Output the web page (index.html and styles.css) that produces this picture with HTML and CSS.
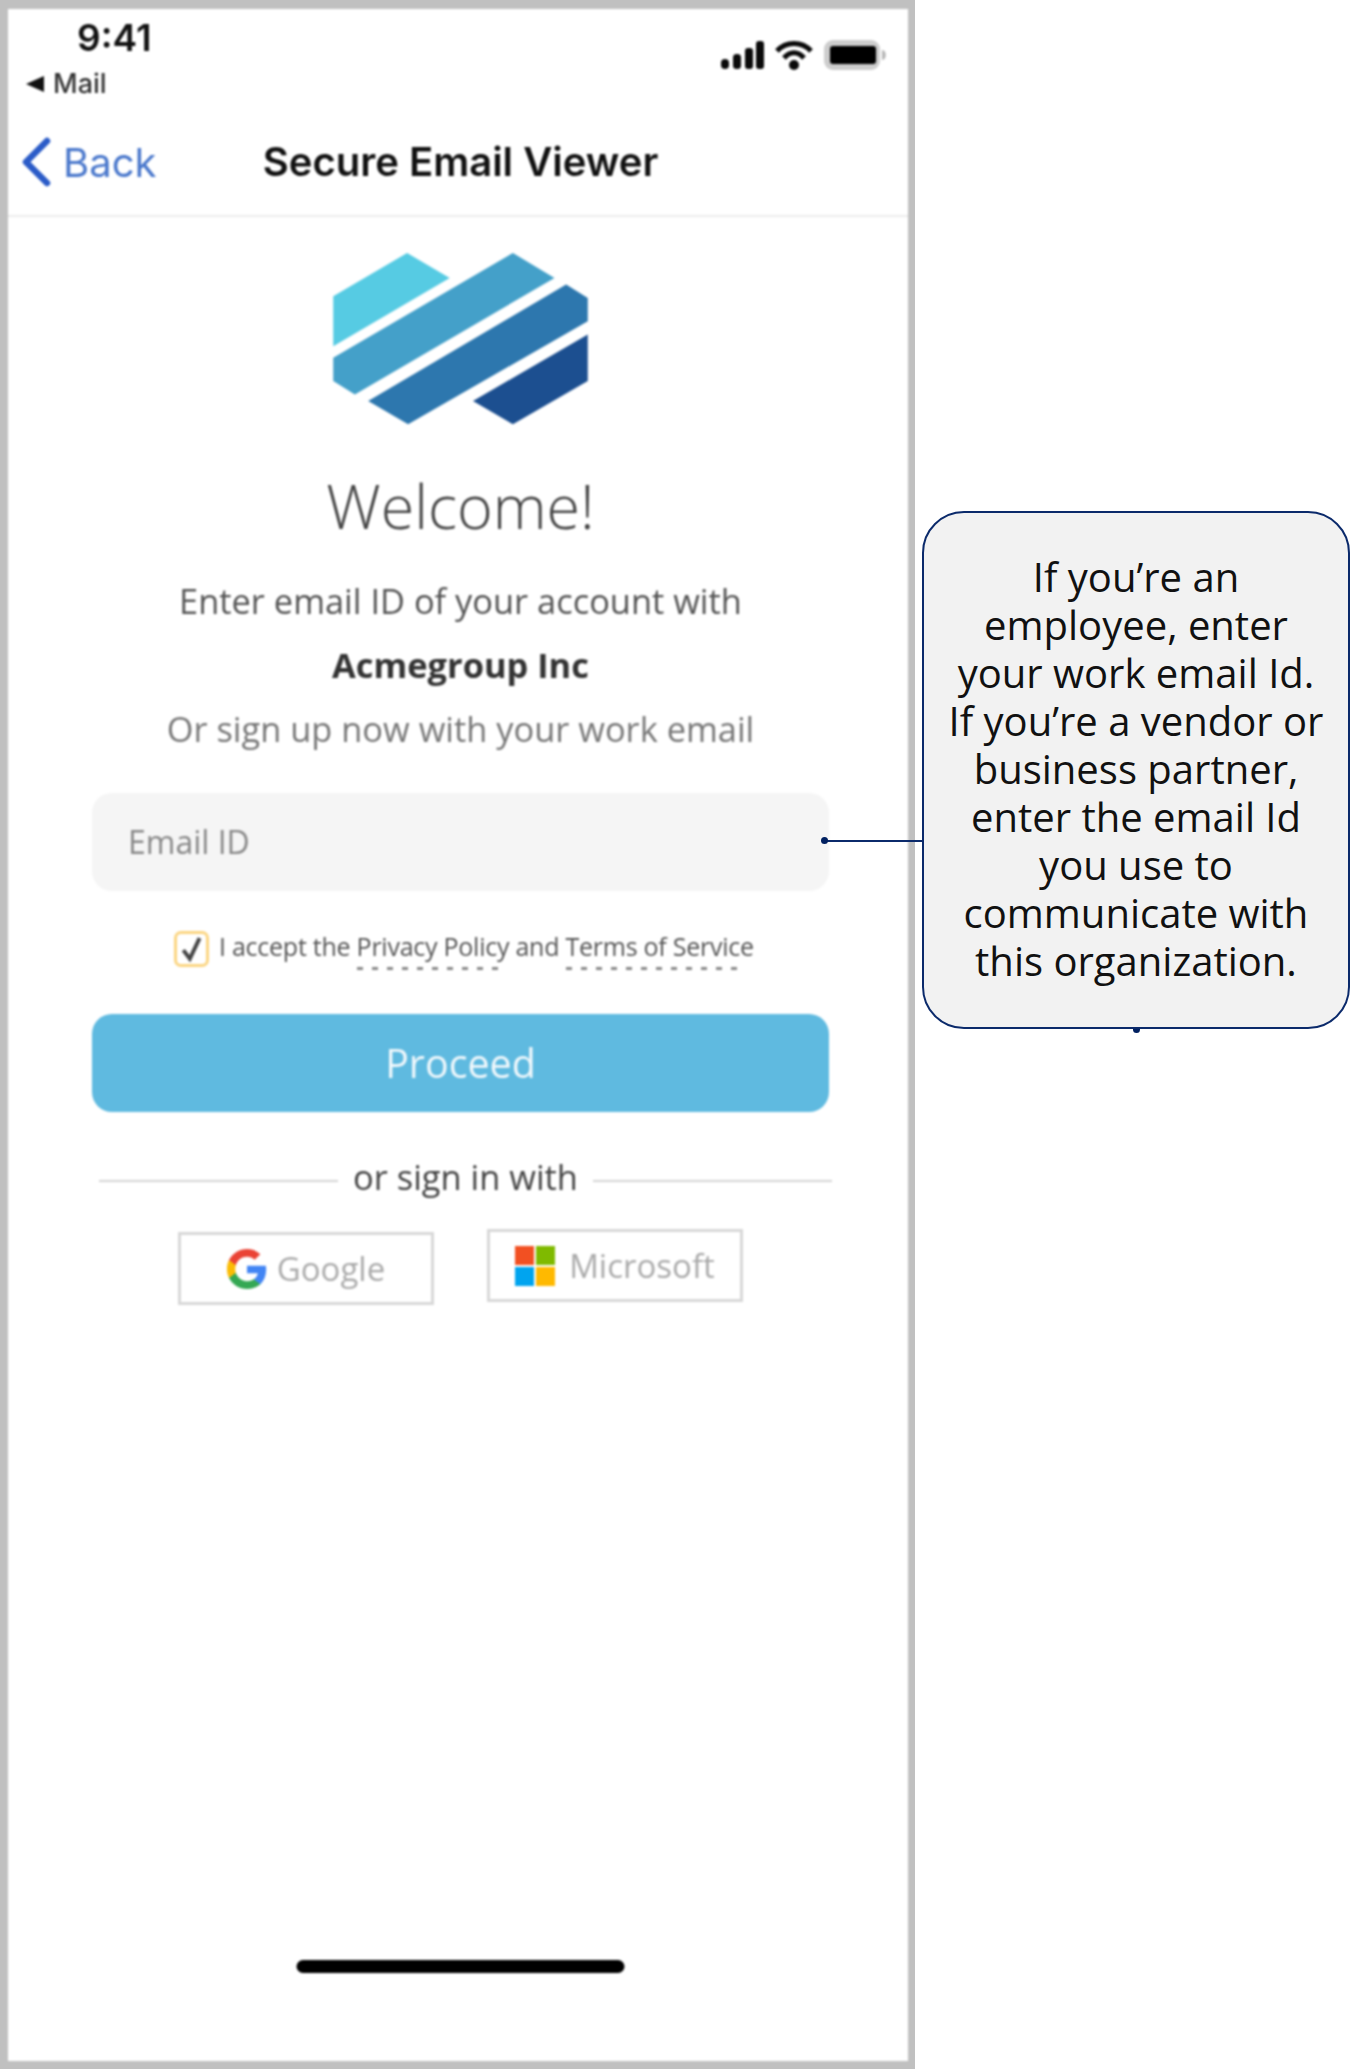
FILE: index.html
```html
<!DOCTYPE html>
<html lang="en">
<head>
    <meta charset="UTF-8">
    <title>Secure Email Viewer</title>
    <link rel="stylesheet" href="styles.css">
</head>
<body>
    <div class="canvas">
        <div class="phone">
            <div class="screen">
                <div class="status-bar">
                    <div class="status-left">
                        <div class="clock">9:41</div>
                        <div class="back-app"><span class="back-arrow"></span>Mail</div>
                    </div>
                    <div class="status-icons">
                        <svg class="icon-signal" viewBox="0 0 44 30" width="44" height="30">
                            <rect x="1" y="19" width="8" height="10" rx="4" fill="#0a0a0a"/>
                            <rect x="13" y="14" width="8" height="15" rx="3.500" fill="#0a0a0a"/>
                            <rect x="25" y="8" width="8" height="21" rx="3" fill="#0a0a0a"/>
                            <rect x="36" y="1" width="8" height="28" rx="3" fill="#0a0a0a"/>
                        </svg>
                        <svg class="icon-wifi" viewBox="0 0 38 30" width="38" height="30">
                            <path d="M2 11 C11 1 27 1 36 11" fill="none" stroke="#0a0a0a" stroke-width="5"/>
                            <path d="M9 18 C15 11 23 11 29 18" fill="none" stroke="#0a0a0a" stroke-width="5"/>
                            <circle cx="19" cy="25" r="5" fill="#0a0a0a"/>
                        </svg>
                        <svg class="icon-battery" viewBox="0 0 64 30" width="64" height="30">
                            <rect x="0" y="0" width="56" height="30" rx="9" fill="#cdcdcd"/>
                            <rect x="6" y="6" width="46" height="18" rx="3" fill="#000"/>
                            <path d="M58 10 C63 10 63 20 58 20 Z" fill="#b5b5b5"/>
                        </svg>
                    </div>
                </div>
                <div class="nav-bar">
                    <div class="nav-back">
                        <svg viewBox="0 0 32 50" width="32" height="50">
                            <path d="M27 4 L6 25 L27 46" fill="none" stroke="#2b5cc8" stroke-width="6.500" stroke-linecap="round" stroke-linejoin="round"/>
                        </svg>
                        <span>Back</span>
                    </div>
                    <div class="nav-title">Secure Email Viewer</div>
                </div>
                <div class="content">
                    <svg class="logo" viewBox="100 65 765 520" width="255" height="173">
                        <polygon points="100,195 322,65 450,140 100,345" fill="#56cbe3"/>
                        <polygon points="100,380 640,65 765,140 165,490 100,450" fill="#44a0c9"/>
                        <polygon points="800,160 865,200 865,270 325,580 205,510" fill="#2d77ae"/>
                        <polygon points="865,310 865,450 640,580 520,510" fill="#1c4f90"/>
                    </svg>
                    <h1 class="welcome">Welcome!</h1>
                    <p class="intro">Enter email ID of your account with</p>
                    <p class="company">Acmegroup Inc</p>
                    <p class="intro muted">Or sign up now with your work email</p>
                    <div class="email-input">Email ID</div>
                    <div class="terms">
                        <span class="checkbox">
                            <svg viewBox="0 0 24 24" width="26" height="26">
                                <path d="M4 13 L10 21 L19 2" fill="none" stroke="#444" stroke-width="3.600"/>
                            </svg>
                        </span>
                        <span class="terms-text">I accept the <span class="terms-link">Privacy Policy</span> and <span class="terms-link">Terms of Service</span></span>
                    </div>
                    <div class="proceed">Proceed</div>
                    <div class="divider"><span>or sign in with</span></div>
                    <div class="providers">
                        <div class="provider google">
                            <svg viewBox="0 0 24 24" width="40" height="40">
                                <path d="M23.5 12.3c0-.9-.1-1.600-.2-2.300H12v4.500h6.500c-.3 1.500-1.100 2.700-2.400 3.600v3h3.900c2.300-2.100 3.500-5.200 3.500-8.800z" fill="#4285f4"/>
                                <path d="M12 24c3.200 0 6-1.100 8-2.900l-3.900-3c-1.100.7-2.500 1.200-4.100 1.200-3.100 0-5.800-2.100-6.700-5H1.200v3.100C3.200 21.300 7.300 24 12 24z" fill="#34a853"/>
                                <path d="M5.300 14.300c-.5-1.500-.5-3.100 0-4.600V6.600H1.200c-1.700 3.300-1.700 7.500 0 10.800l4.100-3.100z" fill="#fbbc05"/>
                                <path d="M12 4.700c1.800 0 3.400.6 4.600 1.800l3.400-3.400C18 1.200 15.200 0 12 0 7.300 0 3.200 2.700 1.200 6.600l4.100 3.100c.9-2.900 3.600-5 6.700-5z" fill="#ea4335"/>
                            </svg>
                            <span>Google</span>
                        </div>
                        <div class="provider microsoft">
                            <svg viewBox="0 0 40 40" width="40" height="40">
                                <rect x="0" y="0" width="19" height="19" fill="#f25022"/>
                                <rect x="21" y="0" width="19" height="19" fill="#7fba00"/>
                                <rect x="0" y="21" width="19" height="19" fill="#00a4ef"/>
                                <rect x="21" y="21" width="19" height="19" fill="#ffb900"/>
                            </svg>
                            <span>Microsoft</span>
                        </div>
                    </div>
                </div>
                <div class="home-bar"></div>
            </div>
        </div>
        <div class="callout">If you’re an employee, enter your work email Id.<br>If you’re a vendor or business partner, enter the email Id you use to communicate with this organization.</div>
        <!-- connector lines sit over the phone -->
        <div class="connector"></div>
        <div class="connector-dot"></div>
        <div class="callout-dot"></div>
    </div>
</body>
</html>
```

FILE: styles.css
```css
html, body {
    margin: 0;
    padding: 0;
    background: #fff;
}

.canvas {
    position: relative;
    display: flex;
    align-items: flex-start;
    width: 1358px;
    height: 2069px;
    overflow: hidden;
    font-family: 'Open Sans', sans-serif;
}

.phone {
    box-sizing: border-box;
    width: 915px;
    height: 2069px;
    flex-shrink: 0;
    background: #c0c0c0;
    padding: 9px 7px 8px 8px;
}

.screen {
    display: flex;
    flex-direction: column;
    height: 100%;
    background: #fff;
    filter: blur(0.8px);
}

.status-bar {
    display: flex;
    justify-content: space-between;
    align-items: flex-start;
    height: 108px;
    font-family: 'Inter', sans-serif;
    color: #111;
}

.status-left {
    padding-left: 18px;
}

.clock {
    font-size: 37px;
    font-weight: 600;
    line-height: 44px;
    margin-top: 7px;
    padding-left: 51px;
}

.back-app {
    display: flex;
    align-items: center;
    gap: 9px;
    font-size: 27px;
    font-weight: 500;
    line-height: 30px;
    margin-top: 9px;
    color: #333;
}

.back-arrow {
    width: 0;
    height: 0;
    border-top: 8px solid transparent;
    border-bottom: 8px solid transparent;
    border-right: 18px solid #111;
}

.status-icons {
    display: flex;
    align-items: center;
    gap: 11px;
    padding: 31px 20px 0 0;
}

.nav-bar {
    position: relative;
    display: flex;
    align-items: center;
    justify-content: center;
    box-sizing: border-box;
    height: 100px;
    padding: 0 0 10px 5px;
    border-bottom: 2px solid #ececec;
    font-family: 'Inter', sans-serif;
}

.nav-back {
    position: absolute;
    left: 12px;
    top: 20px;
    display: flex;
    align-items: center;
    gap: 11px;
    color: #4a78cc;
    font-size: 40px;
}

.nav-title {
    font-size: 40px;
    font-weight: 600;
    color: #111;
}

.content {
    flex: 1;
    display: flex;
    flex-direction: column;
    align-items: center;
    padding: 36px 0 0 5px;
}

.logo {
    display: block;
    margin-bottom: 40px;
}

.welcome {
    margin: 0 0 23px;
    font-size: 61px;
    line-height: 80px;
    font-weight: 300;
    color: #444;
}

.intro,
.company {
    margin: 0;
    font-size: 34.4px;
    line-height: 64px;
    color: #555;
}

.company {
    font-weight: 700;
    color: #333;
}

.muted {
    color: #777;
}

.email-input {
    box-sizing: border-box;
    width: 737px;
    height: 98px;
    margin-top: 32px;
    padding: 0 36px;
    border-radius: 20px;
    background: #f5f5f5;
    color: #888;
    font-size: 32px;
    line-height: 98px;
}

.terms {
    display: flex;
    align-items: center;
    align-self: flex-start;
    gap: 10px;
    margin: 39px 0 0 161px;
    height: 38px;
}

.checkbox {
    box-sizing: border-box;
    display: flex;
    align-items: center;
    justify-content: center;
    width: 35px;
    height: 36px;
    border: 3px solid #fbd581;
    border-radius: 7px;
}

.terms-text {
    font-size: 25px;
    letter-spacing: -0.25px;
    color: #555;
    white-space: nowrap;
}

.terms-link {
    display: inline-block;
    line-height: 34px;
    vertical-align: top;
    background: repeating-linear-gradient(90deg, #888 0 6px, transparent 6px 15px) left bottom / 96% 3px no-repeat;
    padding-bottom: 7px;
}

.proceed {
    width: 737px;
    height: 98px;
    margin-top: 46px;
    border-radius: 20px;
    background: #5fbae0;
    color: #f0f8fc;
    font-size: 39.4px;
    line-height: 98px;
    text-align: center;
}

.divider {
    display: flex;
    align-items: center;
    gap: 15px;
    width: 733px;
    margin: 41px 0 0 10px;
    font-size: 34.4px;
    line-height: 48px;
    color: #444;
}

.divider::before,
.divider::after {
    content: "";
    flex: 1;
    height: 2px;
    background: #d4d4d4;
    margin-top: 7px;
}

.providers {
    display: flex;
    align-items: flex-start;
    gap: 53px;
    margin-top: 28px;
}

.provider {
    box-sizing: border-box;
    display: flex;
    align-items: center;
    justify-content: center;
    gap: 12px;
    width: 256px;
    height: 73px;
    border: 3px solid #d8d8d8;
    color: #aaa;
    font-size: 33px;
}

.google {
    margin-top: 3px;
    gap: 10px;
}

.microsoft {
    gap: 14px;
}

.home-bar {
    width: 328px;
    height: 13px;
    margin: 0 auto 88px;
    border-radius: 7px;
    background: #000;
    transform: translateX(2.5px);
}

.callout {
    box-sizing: border-box;
    width: 428px;
    height: 518px;
    margin: 511px 0 0 7px;
    padding: 40px 20px 0;
    border: 2.5px solid #0b2a6b;
    border-radius: 42px;
    background: #f2f2f2;
    color: #111;
    font-size: 40px;
    line-height: 48px;
    text-align: center;
}

.connector {
    position: absolute;
    left: 822px;
    top: 840px;
    width: 100px;
    height: 1.5px;
    background: #0b2a6b;
}

.connector-dot,
.callout-dot {
    position: absolute;
    background: #002060;
}

.connector-dot {
    left: 821px;
    top: 837px;
    width: 7px;
    height: 7px;
    border-radius: 50%;
}

.callout-dot {
    left: 1133px;
    top: 1029px;
    width: 7px;
    height: 4px;
    border-radius: 0 0 4px 4px;
}
```
